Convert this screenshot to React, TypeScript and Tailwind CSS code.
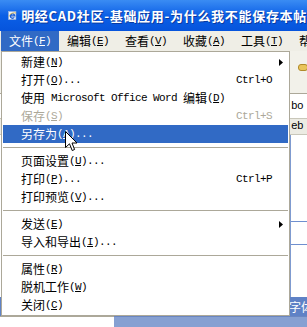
import React from "react";

type Item =
  | "sep"
  | {
      label: string;
      k: string;
      dots?: boolean;
      sc?: string;
      sub?: boolean;
      off?: boolean;
      on?: boolean;
    };

const items: Item[] = [
  { label: "新建", k: "N", sub: true },
  { label: "打开", k: "O", dots: true, sc: "Ctrl+O" },
  { label: "使用 Microsoft Office Word 编辑", k: "D" },
  { label: "保存", k: "S", sc: "Ctrl+S", off: true },
  { label: "另存为", k: "A", dots: true, on: true },
  "sep",
  { label: "页面设置", k: "U", dots: true },
  { label: "打印", k: "P", dots: true, sc: "Ctrl+P" },
  { label: "打印预览", k: "V", dots: true },
  "sep",
  { label: "发送", k: "E", sub: true },
  { label: "导入和导出", k: "I", dots: true },
  "sep",
  { label: "属性", k: "R" },
  { label: "脱机工作", k: "W" },
  { label: "关闭", k: "C" },
];

const menus = [
  { label: "文件", k: "F" },
  { label: "编辑", k: "E" },
  { label: "查看", k: "V" },
  { label: "收藏", k: "A" },
  { label: "工具", k: "T" },
  { label: "帮助", k: "H" },
];

// latin runs are half width (6px), like the old Song bitmap font
function Txt({ s }: { s: string }) {
  const parts = s.match(/[\x00-\x7f]+|[^\x00-\x7f]+/g) ?? [];
  return (
    <>
      {parts.map((p, i) =>
        /^[\x00-\x7f]/.test(p) ? (
          <span key={i} className="font-['Liberation_Mono',monospace] text-[11px] tracking-[-0.6px] whitespace-pre">
            {p}
          </span>
        ) : (
          <span key={i}>{p}</span>
        )
      )}
    </>
  );
}

function Key({ k }: { k: string }) {
  return (
    <span className="font-['Liberation_Mono',monospace] text-[11px] tracking-[-0.6px]">
      (<span className="underline underline-offset-1">{k}</span>)
    </span>
  );
}

function Cursor() {
  return (
    <svg width="13" height="21" viewBox="0 0 13 21" className="absolute left-[65px] top-[100px]">
      <path
        d="M0.5 0.5 L0.5 16.5 L4.5 12.8 L7.2 19.5 L9.6 18.5 L7 12 L12 12 Z"
        fill="#fff"
        stroke="#000"
        strokeWidth="1"
        strokeLinejoin="miter"
      />
    </svg>
  );
}

function IeIcon() {
  return (
    <svg width="15" height="15" viewBox="0 0 15 15">
      <rect x="1" y="1" width="12" height="13" fill="#eef3fb" stroke="#9db4dd" />
      <path d="M4 8 H11 A3.6 3.6 0 1 0 10.3 10.6" fill="none" stroke="#1c5fd4" strokeWidth="2.2" />
      <path d="M1.5 9 C3 4 9 2 13.5 3.5" fill="none" stroke="#e8b832" strokeWidth="1.2" />
    </svg>
  );
}

export default function App() {
  return (
    <div className="relative w-[307px] h-[327px] overflow-hidden flex flex-col font-['Noto_Sans_CJK_SC','Noto_Sans',sans-serif] text-[12px] text-black select-none">
      {/* title bar */}
      <div className="h-[31px] shrink-0 flex items-center gap-[4px] pl-[8px] bg-linear-to-b from-[#3a8cf3] via-[#0b5fe6] to-[#0654dc] text-white">
        <IeIcon />
        <span className="text-[13px] font-bold whitespace-nowrap leading-none tracking-[0.7px] [text-shadow:1px_1px_0_#0a3aa0]">
          明经CAD社区-基础应用-为什么我不能保存本帖
        </span>
      </div>

      <div className="flex-1 flex">
        {/* window frame */}
        <div className="w-[4px] bg-[#1f5dd8]" />

        <div className="relative flex-1 flex flex-col">
          {/* menu bar */}
          <div className="h-[20px] shrink-0 flex pl-[1px] bg-[#efeee6] leading-none">
            {menus.map((m, i) => (
              <div
                key={m.label}
                className={
                  "w-[58px] shrink-0 flex items-center justify-center whitespace-nowrap " +
                  (i === 0 ? "bg-[#316ac5] text-white" : "")
                }
              >
                {m.label}
                <Key k={m.k} />
              </div>
            ))}
          </div>

          {/* page behind the menu */}
          <div className="flex-1 flex flex-col bg-white text-[12px] leading-none">
            <div className="h-[42px] shrink-0 bg-[#f2f1ea] flex pl-[298px] pt-[13px]">
              <div className="w-[10px] h-[7px] rounded-[3px] bg-[#e9c45a] border border-[#b08a2a]" />
            </div>
            <div className="h-px bg-[#aca899]" />
            <div className="h-[24px] shrink-0 flex items-center pl-[291px]">
              <Txt s="bo" />
            </div>
            <div className="h-[17px] shrink-0 flex items-center pl-[291px] bg-[#ecebe3] border-y border-[#c9c7ba]">
              <Txt s="eb" />
            </div>
            <div className="flex-1 flex">
              <div className="w-[290px] shrink-0" />
              <div className="flex-1 border-l border-[#7f9bd0] flex flex-col">
                <div className="h-[86px]" />
                <div className="h-px bg-[#6f8fcf]" />
                <div className="h-[22px]" />
                <div className="h-px bg-[#6f8fcf]" />
              </div>
            </div>
            <div className="h-[19px] shrink-0 bg-[#5f82c6] flex items-center pl-[289px] text-white">字体</div>
            <div className="h-[11px] shrink-0 flex">
              <div className="w-[114px] border-t border-[#aca899] bg-white" />
              <div className="flex-1 bg-[#86a0d2] border-t border-[#6a86c0]" />
            </div>
          </div>

          {/* file dropdown */}
          <div className="absolute left-[1px] top-[20px] w-[289px] border border-[#aca899] bg-white p-px leading-none">
            {items.map((it, i) =>
              it === "sep" ? (
                <div key={i} className="h-[9px] flex items-center">
                  <div className="h-px flex-1 bg-[#aca899]" />
                </div>
              ) : (
                <div
                  key={i}
                  className={
                    "h-[18px] flex items-center whitespace-nowrap " +
                    (it.on ? "bg-[#316ac5] text-white " : "") +
                    (it.off ? "text-[#aca899]" : "")
                  }
                >
                  <div className="flex-1 pl-[18px] flex items-center">
                    <Txt s={it.label} />
                    <Key k={it.k} />
                    {it.dots && <Txt s="..." />}
                  </div>
                  <div className="w-[52px] h-full flex items-center">
                    {it.sc && <Txt s={it.sc} />}
                    {it.sub && (
                      <svg width="4" height="7" viewBox="0 0 4 7" className="ml-[43px]">
                        <path d="M0 0 L4 3.5 L0 7 Z" fill="#000" />
                      </svg>
                    )}
                  </div>
                </div>
              )
            )}
          </div>

          <Cursor />
        </div>
      </div>
    </div>
  );
}
